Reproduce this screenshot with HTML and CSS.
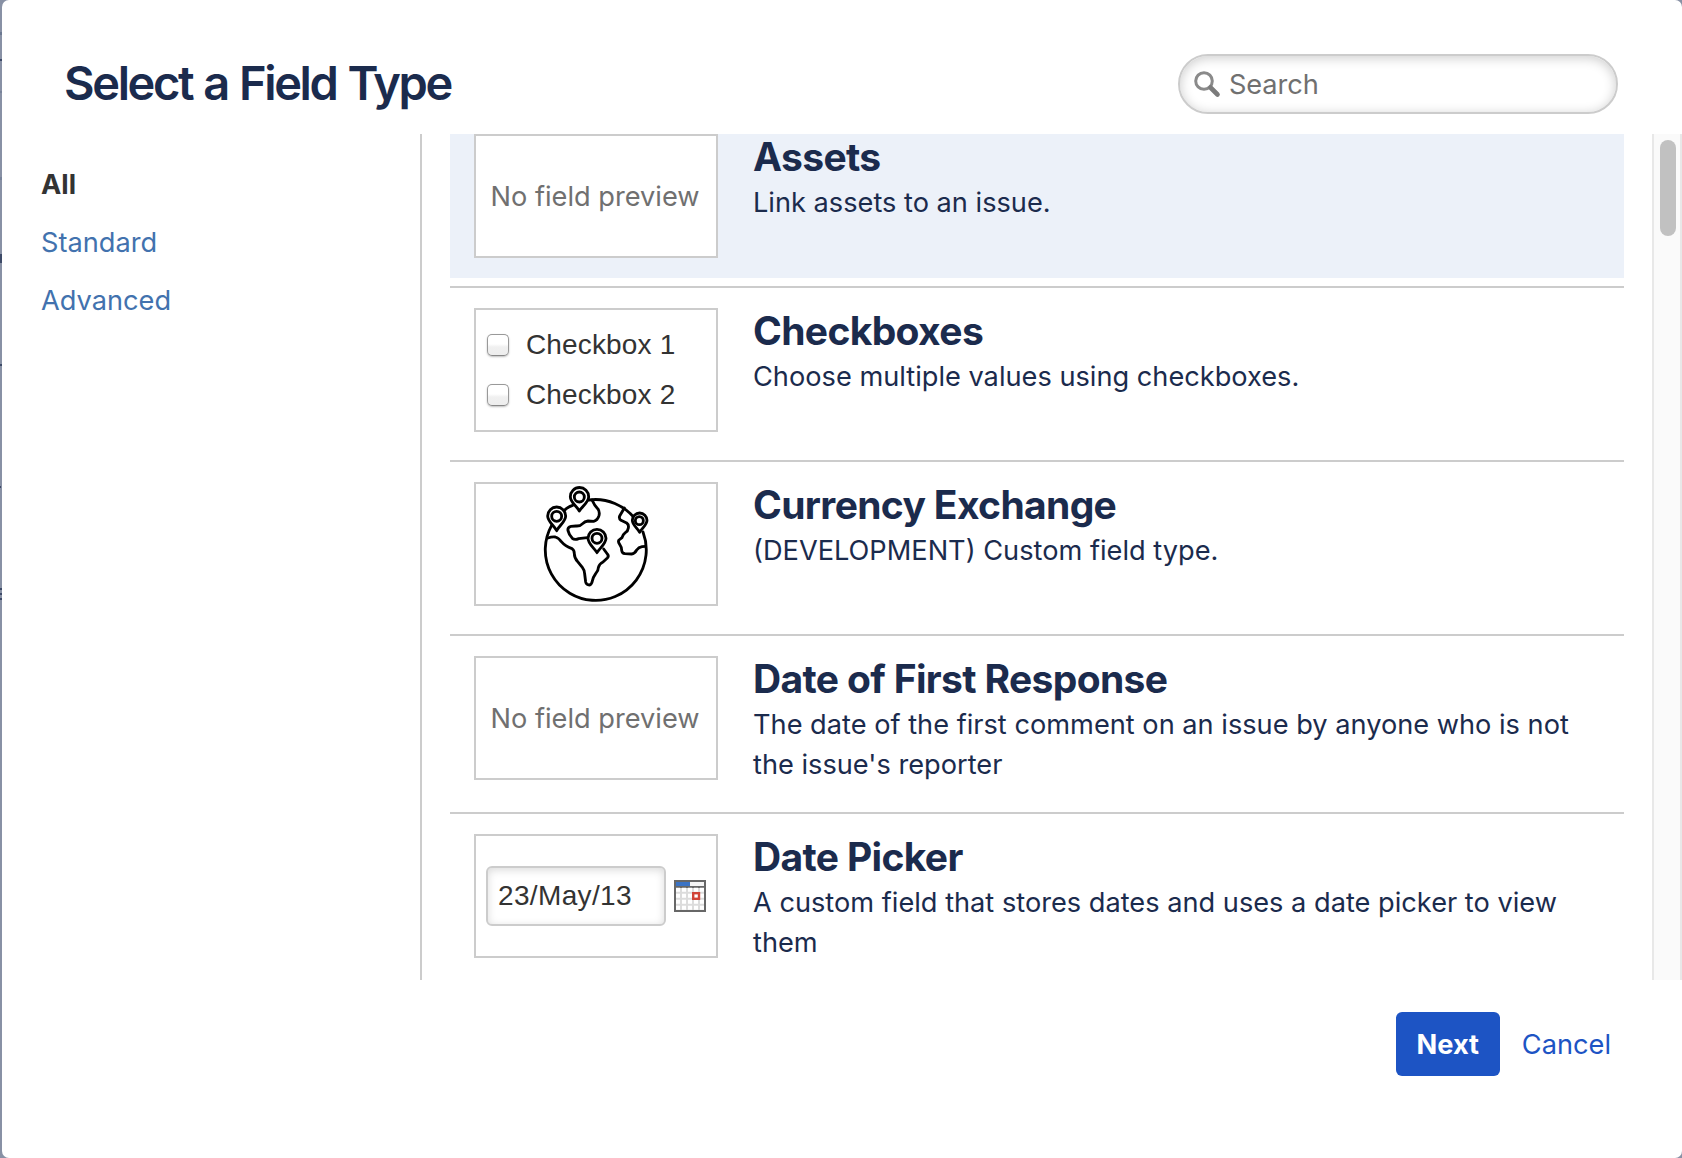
FILE: index.html
```html
<!DOCTYPE html>
<html lang="en">
<head>
<meta charset="utf-8">
<title>Select a Field Type</title>
<link rel="stylesheet" href="styles.css">
</head>
<body>
<div class="dialog">
  <header class="dialog-header">
    <h1 class="dialog-title">Select a Field Type</h1>
    <div class="search">
      <svg class="search-icon" viewBox="0 0 28 28" width="28" height="28">
        <circle cx="10" cy="11" r="8.300" fill="none" stroke="#8a8a8a" stroke-width="3"/>
        <path d="M16.500 17.500L23.500 24.500" stroke="#7b7b7b" stroke-width="4.600" stroke-linecap="round"/>
      </svg>
      <span class="search-text">Search</span>
    </div>
  </header>

  <main class="dialog-body">
    <nav class="menu">
      <span class="menu-item menu-current">All</span>
      <a class="menu-item">Standard</a>
      <a class="menu-item">Advanced</a>
    </nav>

    <ul class="types">
      <li class="type">
        <div class="type-inner selected">
          <div class="preview preview-none">No field preview</div>
          <div class="info">
            <h3 class="name">Assets</h3>
            <p class="desc">Link assets to an issue.</p>
          </div>
        </div>
      </li>
      <li class="type">
        <div class="type-inner">
          <div class="preview preview-checks">
            <div class="check"><span class="box"></span>Checkbox 1</div>
            <div class="check"><span class="box"></span>Checkbox 2</div>
          </div>
          <div class="info">
            <h3 class="name">Checkboxes</h3>
            <p class="desc">Choose multiple values using checkboxes.</p>
          </div>
        </div>
      </li>
      <li class="type">
        <div class="type-inner">
          <div class="preview">
            <svg class="globe" viewBox="48 27 360 360" width="120" height="120" fill="none" stroke="#000" stroke-width="8.500" stroke-linejoin="round" stroke-linecap="round">
              <path d="M206 75A151 151 0 0 1 347 134M369 171A151.500 151.500 0 1 1 95 151M132 108Q141 96 158 91"/>
              <path d="M216 75Q223 91 233 101Q240 109 237 122Q233 136 221 139L204 138Q194 139 188 146Q181 154 168 153L153 154Q142 156 144 167Q147 180 157 190Q164 196 176 191L202 188"/>
              <path d="M84 189Q95 185 106 186Q117 189 124 200Q135 213 156 221Q163 226 163 236Q163 249 173 260L187 277Q193 284 194 297L197 321Q199 330 208 330Q215 329 217 318Q219 307 227 296Q235 287 235 278Q238 266 249 261L262 249Q268 243 262 237L251 222"/>
              <path d="M313 99L299 123Q296 131 303 136L320 144Q327 149 325 159Q324 168 316 173Q309 178 306 188L297 195Q293 200 299 208Q305 216 305 226Q306 235 315 236L335 237Q344 236 350 225Q356 217 366 215L377 214"/>
              <g fill="#fff">
                <path d="M178 108C170 93 151 82 151 65A27 27 0 0 1 206 65C206 82 187 93 178 108Z"/>
                <circle cx="178" cy="66" r="15"/>
                <path d="M110 167C102 151 83 140 83 123A27 27 0 0 1 137 123C137 140 118 151 110 167Z"/>
                <circle cx="110" cy="124" r="15"/>
                <path d="M231 233C223 219 204 207 204 190A27 27 0 0 1 258 190C258 207 239 219 231 233Z"/>
                <circle cx="231" cy="190" r="15"/>
                <path d="M359 172C352 159 337 150 337 136A21.500 21.500 0 0 1 381 136C381 150 366 159 359 172Z"/>
                <circle cx="358" cy="137" r="12"/>
              </g>
            </svg>
          </div>
          <div class="info">
            <h3 class="name">Currency Exchange</h3>
            <p class="desc">(DEVELOPMENT) Custom field type.</p>
          </div>
        </div>
      </li>
      <li class="type">
        <div class="type-inner">
          <div class="preview preview-none">No field preview</div>
          <div class="info">
            <h3 class="name">Date of First Response</h3>
            <p class="desc">The date of the first comment on an issue by anyone who is not the issue's reporter</p>
          </div>
        </div>
      </li>
      <li class="type">
        <div class="type-inner">
          <div class="preview preview-date">
            <span class="date-input">23/May/13</span>
            <svg class="calendar" viewBox="0 0 32 32" width="32" height="32">
              <rect width="32" height="32" fill="#676767"/>
              <rect x="2" y="2" width="14" height="4" fill="#3b73c4"/>
              <rect x="16" y="2" width="14" height="4" fill="#f4f4f4"/>
              <rect x="2" y="8" width="28" height="22" fill="#dcdcdc"/>
              <path d="M2 9.800h28M2 15.800h28M2 21.800h28M2 27.800h28" stroke="#fff" stroke-width="4" stroke-dasharray="4 2"/>
              <rect x="19.200" y="13.200" width="5.800" height="5.600" fill="#fff" stroke="#d04437" stroke-width="2.400"/>
            </svg>
          </div>
          <div class="info">
            <h3 class="name">Date Picker</h3>
            <p class="desc">A custom field that stores dates and uses a date picker to view them</p>
          </div>
        </div>
      </li>
    </ul>

    <div class="scrollbar"><div class="thumb"></div></div>
  </main>

  <footer class="dialog-footer">
    <button class="next">Next</button>
    <a class="cancel">Cancel</a>
  </footer>
</div>
</body>
</html>
```
FILE: styles.css
```css
* { box-sizing: border-box; }

body {
  margin: 0;
  height: 1158px;
  overflow: hidden;
  padding-left: 2px;
  font-family: Inter, "Liberation Sans", sans-serif;
  font-size: 27.200px;
  line-height: 41px;
  color: #1b2b4d;
  background:
    linear-gradient(#6b7891, #6b7891) 0 32px / 2px 3px no-repeat,
    linear-gradient(#3d4a68, #3d4a68) 0 59px / 2px 2px no-repeat,
    linear-gradient(#78839a, #78839a) 0 91px / 2px 2px no-repeat,
    linear-gradient(#78839a, #78839a) 0 177px / 2px 3px no-repeat,
    linear-gradient(#3d4a68, #3d4a68) 0 254px / 2px 9px no-repeat,
    linear-gradient(#3d4a68, #3d4a68) 0 364px / 2px 2px no-repeat,
    linear-gradient(#3d4a68, #3d4a68) 0 486px / 1px 2px no-repeat,
    linear-gradient(#3d4a68, #3d4a68) 0 588px / 2px 2px no-repeat,
    linear-gradient(#3d4a68, #3d4a68) 0 593px / 2px 2px no-repeat,
    linear-gradient(#3d4a68, #3d4a68) 0 598px / 2px 2px no-repeat,
    #8891a5;
}

.dialog {
  display: flex;
  flex-direction: column;
  height: 1158px;
  background: #fff;
  border-radius: 7px;
}

.dialog-header {
  display: flex;
  justify-content: space-between;
  align-items: center;
  height: 134px;
  padding: 34px 64px 0 62px;
}

.dialog-title {
  margin: 0 0 2px;
  font-size: 47px;
  line-height: 56px;
  font-weight: 600;
  letter-spacing: -2.350px;
  word-spacing: 1.500px;
}

.search {
  display: flex;
  align-items: center;
  width: 440px;
  height: 60px;
  padding-left: 14px;
  border: 2px solid #ccc;
  border-radius: 30px;
  box-shadow: inset 0 2px 12px rgba(0, 0, 0, .2);
  color: #707070;
}

.search-text { padding-left: 7px; letter-spacing: -.100px; }

.dialog-body {
  display: flex;
  height: 846px;
  overflow: hidden;
}

.menu {
  display: flex;
  flex-direction: column;
  gap: 17px;
  width: 420px;
  padding: 30px 0 0 39px;
  border-right: 2px solid #ccc;
}

.menu-item { color: #4272ae; }
.menu-current { color: #333; font-weight: 700; }

.types {
  width: 1174px;
  margin: -20px 28px 0;
  padding: 0;
  list-style: none;
}

.type {
  padding: 8px 0;
  border-bottom: 2px solid #ccc;
}

.type:first-child { padding-top: 0; }
.type:first-child .type-inner { padding-top: 20px; }

.type-inner {
  display: flex;
  gap: 35px;
  padding: 12px 23px 20px 24px;
}

.selected { background: #ecf1f9; }

.preview {
  display: flex;
  flex: none;
  align-items: center;
  justify-content: center;
  width: 244px;
  height: 124px;
  border: 2px solid #ccc;
  background: #fff;
  overflow: hidden;
}

.preview-none { padding-right: 2px; color: #707070; white-space: nowrap; }

.preview-checks {
  flex-direction: column;
  align-items: flex-start;
  gap: 10px;
  padding-left: 11px;
  font: 28px/40px "Liberation Sans", Arial, sans-serif;
  letter-spacing: .150px;
  color: #333;
}

.check { display: flex; align-items: center; gap: 17px; }

.box {
  width: 22px;
  height: 22px;
  border: 1.500px solid #999;
  border-bottom-color: #888;
  border-radius: 5px;
  background: linear-gradient(#fff 0 45%, #f0f0f0 60%, #eee);
  box-shadow: 0 1px 2px rgba(0, 0, 0, .25);
}

.preview-date { gap: 8px; }

.date-input {
  width: 180px;
  height: 60px;
  padding: 8px 0 0 10px;
  border: 2px solid #ccc;
  border-radius: 6px;
  box-shadow: inset 0 2px 8px rgba(0, 0, 0, .15);
  font: 28px/40px "Liberation Sans", Arial, sans-serif;
  letter-spacing: .350px;
  color: #333;
}

.name {
  margin: 0;
  font-size: 39px;
  line-height: 46px;
  font-weight: 700;
  letter-spacing: -.650px;
}

.desc { margin: 0 0 -1px; padding-top: 3px; line-height: 40px; }

.scrollbar {
  width: 30px;
  padding: 6px;
  border: solid #e8e8e8;
  border-width: 0 2px;
  background: #fafafa;
}

.thumb {
  width: 16px;
  height: 96px;
  border-radius: 8px;
  background: #c1c1c1;
}

.dialog-footer {
  display: flex;
  justify-content: flex-end;
  align-items: center;
  gap: 22px;
  padding: 32px 71px 0 0;
}

.next {
  width: 104px;
  height: 64px;
  padding: 0;
  border: 0;
  border-radius: 6px;
  background: #1d54c4;
  color: #fff;
  font: 700 27.200px/41px Inter, sans-serif;
}

.cancel { color: #1d54c4; }
```
